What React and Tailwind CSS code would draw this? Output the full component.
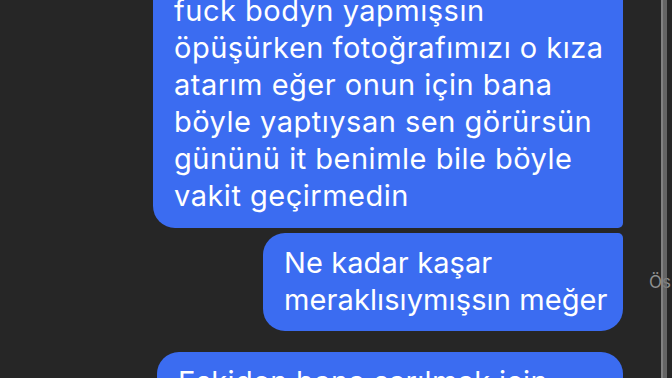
import React from 'react';

const lines1 = [
  'fuck bodyn yapmışsın',
  'öpüşürken fotoğrafımızı o kıza',
  'atarım eğer onun için bana',
  'böyle yaptıysan sen görürsün',
  'gününü it benimle bile böyle',
  'vakit geçirmedin',
];

const lines2 = ['Ne kadar kaşar', 'meraklısıymışsın meğer'];

const lines3 = ['Eskiden bana sarılmak için', 'can atardın'];

const Bubble = ({ lines, className }) => (
  <div className={`bg-[#3b6cf1] text-white text-[29px] leading-[37px] whitespace-nowrap ${className}`}>
    {lines.map((line, i) => (
      <div key={i}>{line}</div>
    ))}
  </div>
);

const App = () => {
  return (
    <div
      className="relative w-[672px] h-[378px] overflow-hidden bg-[#262626]"
      style={{ fontFamily: 'Inter, "Liberation Sans", sans-serif' }}
    >
      <div className="flex flex-col">
        {/* first message, top scrolled off */}
        <div className="flex justify-end mt-[-39px]">
          <Bubble
            lines={lines1}
            className="w-[470px] pl-[21px] pt-[31px] pb-[14px] tracking-[0.5px] rounded-[22px] rounded-br-[5px]"
          />
          <div className="w-[49px]" />
        </div>

        <div className="flex justify-end items-center mt-[5px]">
          <Bubble
            lines={lines2}
            className="w-[360px] pl-[21px] pt-[11px] pb-[13px] tracking-[0.1px] rounded-[22px] rounded-tr-[5px]"
          />
          <div className="w-[49px] pl-[26px] pt-[2px] text-[17px] text-[#8f8f8f] overflow-hidden whitespace-nowrap">
            Ös
          </div>
        </div>

        <div className="flex justify-end mt-[21px]">
          <Bubble
            lines={lines3}
            className="w-[466px] pl-[21px] pt-[11px] pb-[13px] tracking-[0.3px] rounded-[22px]"
          />
          <div className="w-[49px]" />
        </div>
      </div>

      {/* edge line on the right */}
      <div className="absolute top-0 bottom-0 right-[5px] w-[6px] flex">
        <div className="w-[2px] bg-[#9a9a9a]/80" />
        <div className="w-[4px] bg-[#767676]/80" />
      </div>
    </div>
  );
};

export default App;
